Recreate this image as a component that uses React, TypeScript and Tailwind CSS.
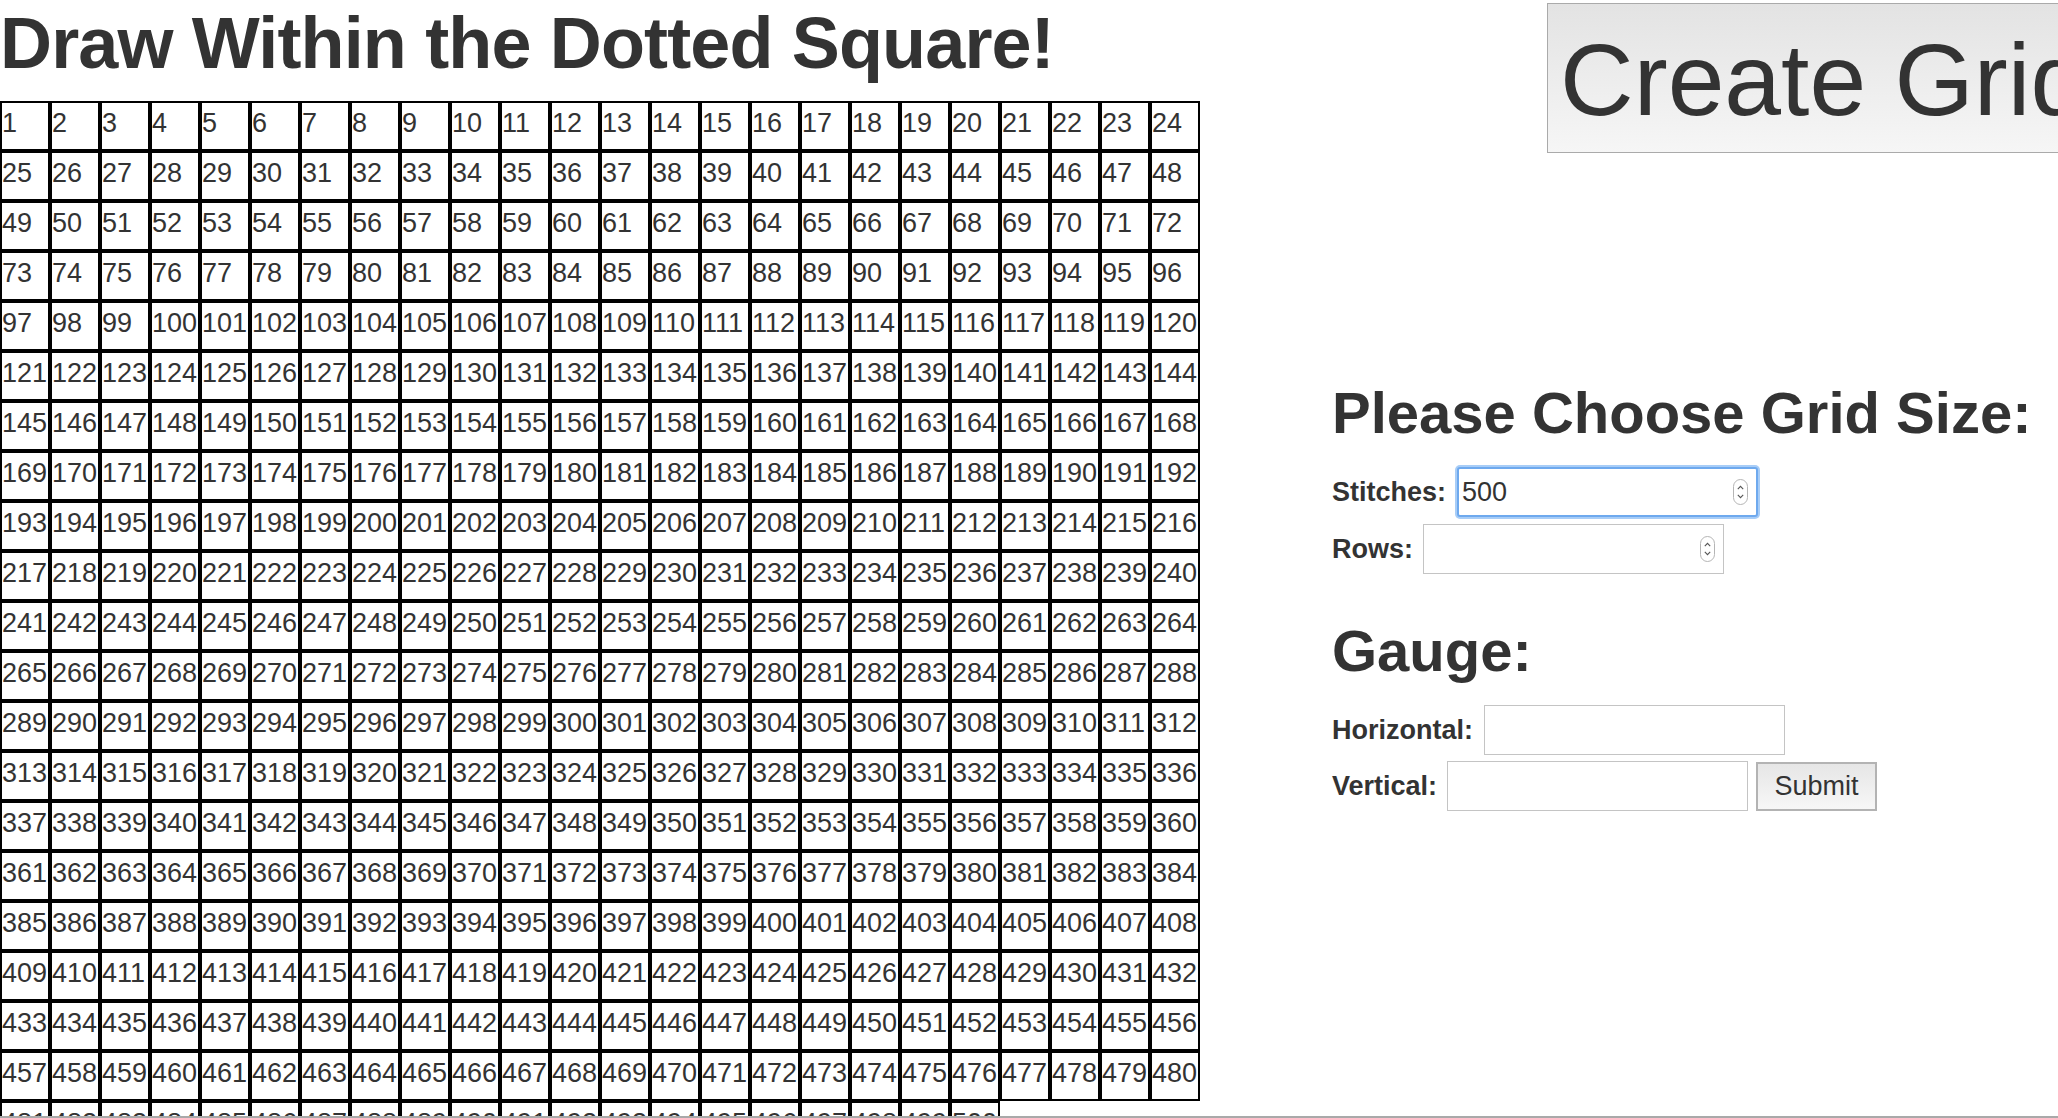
import React from "react";

const cells = Array.from({ length: 500 }, (_, i) => i + 1);

function Spinner({ right }: { right: string }) {
  return (
    <svg
      width="15"
      height="26"
      viewBox="0 0 15 26"
      className={`pointer-events-none absolute top-1/2 -translate-y-1/2 ${right}`}
    >
      <rect x="0.5" y="0.5" width="14" height="25" rx="7" fill="#fff" stroke="#b5b5b5" />
      <path d="M4.8 10.2 L7.5 7.4 L10.2 10.2" fill="none" stroke="#555" strokeWidth="1.1" />
      <path d="M4.8 15.8 L7.5 18.6 L10.2 15.8" fill="none" stroke="#555" strokeWidth="1.1" />
    </svg>
  );
}

export default function App() {
  return (
    <div className="relative w-[2058px] h-[1118px] overflow-hidden bg-white text-[#333] font-['Liberation_Sans',Arial,sans-serif]">
      <div className="flex flex-row items-start">
        {/* Left column */}
        <div className="w-[1201px] shrink-0">
          <h1 className="mt-[7px] text-[72px] leading-[72px] font-bold tracking-[-0.85px] whitespace-nowrap">
            Draw Within the Dotted Square!
          </h1>
          <div className="mt-[22px] flex flex-wrap w-[1200px]">
            {cells.map((n) => (
              <div
                key={n}
                className="w-[50px] h-[50px] border-2 border-black text-[27px] leading-[40px] text-[#333] whitespace-nowrap"
              >
                {n}
              </div>
            ))}
          </div>
        </div>

        {/* Right column */}
        <div className="ml-[131px] flex flex-col shrink-0">
          <button className="self-start ml-[215px] mt-[3px] h-[150px] border border-[#aaaaaa] bg-linear-to-b from-[#e3e3e3] to-[#f6f6f6] pl-[12px] pr-[14px] pt-[18px] pb-[14px] text-[102px] leading-[116px] text-[#333] whitespace-nowrap">
            Create Grid
          </button>

          <h2 className="mt-[231px] text-[58px] leading-[58px] font-bold whitespace-nowrap">
            Please Choose Grid Size:
          </h2>

          <div className="mt-[25px] flex items-center h-[50px]">
            <label className="text-[27px] font-bold whitespace-nowrap">Stitches:</label>
            <div className="relative ml-[11px]">
              <input
                type="text"
                defaultValue="500"
                className="block w-[301px] h-[50px] border-2 border-[#6ea9ee] rounded-[3px] shadow-[0_0_0_2px_#a8cdf7] pl-[3px] text-[27px] text-[#333] outline-none bg-white"
              />
              <Spinner right="right-[10px]" />
            </div>
          </div>

          <div className="mt-[7px] flex items-center h-[50px]">
            <label className="text-[27px] font-bold whitespace-nowrap">Rows:</label>
            <div className="relative ml-[10px]">
              <input
                type="text"
                className="block w-[301px] h-[50px] border border-[#c4c4c4] pl-[3px] text-[27px] text-[#333] outline-none bg-white"
              />
              <Spinner right="right-[9px]" />
            </div>
          </div>

          <h2 className="mt-[48px] text-[58px] leading-[58px] font-bold whitespace-nowrap">Gauge:</h2>

          <div className="mt-[25px] flex items-center h-[50px]">
            <label className="text-[27px] font-bold whitespace-nowrap">Horizontal:</label>
            <input
              type="text"
              className="ml-[11px] block w-[301px] h-[50px] border border-[#c4c4c4] pl-[3px] text-[27px] text-[#333] outline-none bg-white"
            />
          </div>

          <div className="mt-[6px] flex items-center h-[50px]">
            <label className="text-[27px] font-bold whitespace-nowrap">Vertical:</label>
            <input
              type="text"
              className="ml-[10px] block w-[301px] h-[50px] border border-[#c4c4c4] pl-[3px] text-[27px] text-[#333] outline-none bg-white"
            />
            <button className="ml-[8px] w-[121px] h-[49px] border-2 border-[#b3b3b3] bg-linear-to-b from-[#e6e6e6] to-[#f7f7f7] text-[27px] leading-[30px] text-[#333] whitespace-nowrap">
              Submit
            </button>
          </div>
        </div>
      </div>

      <div className="absolute bottom-0 left-0 right-0 h-[2px] bg-[#a9a9a9]" />
    </div>
  );
}
